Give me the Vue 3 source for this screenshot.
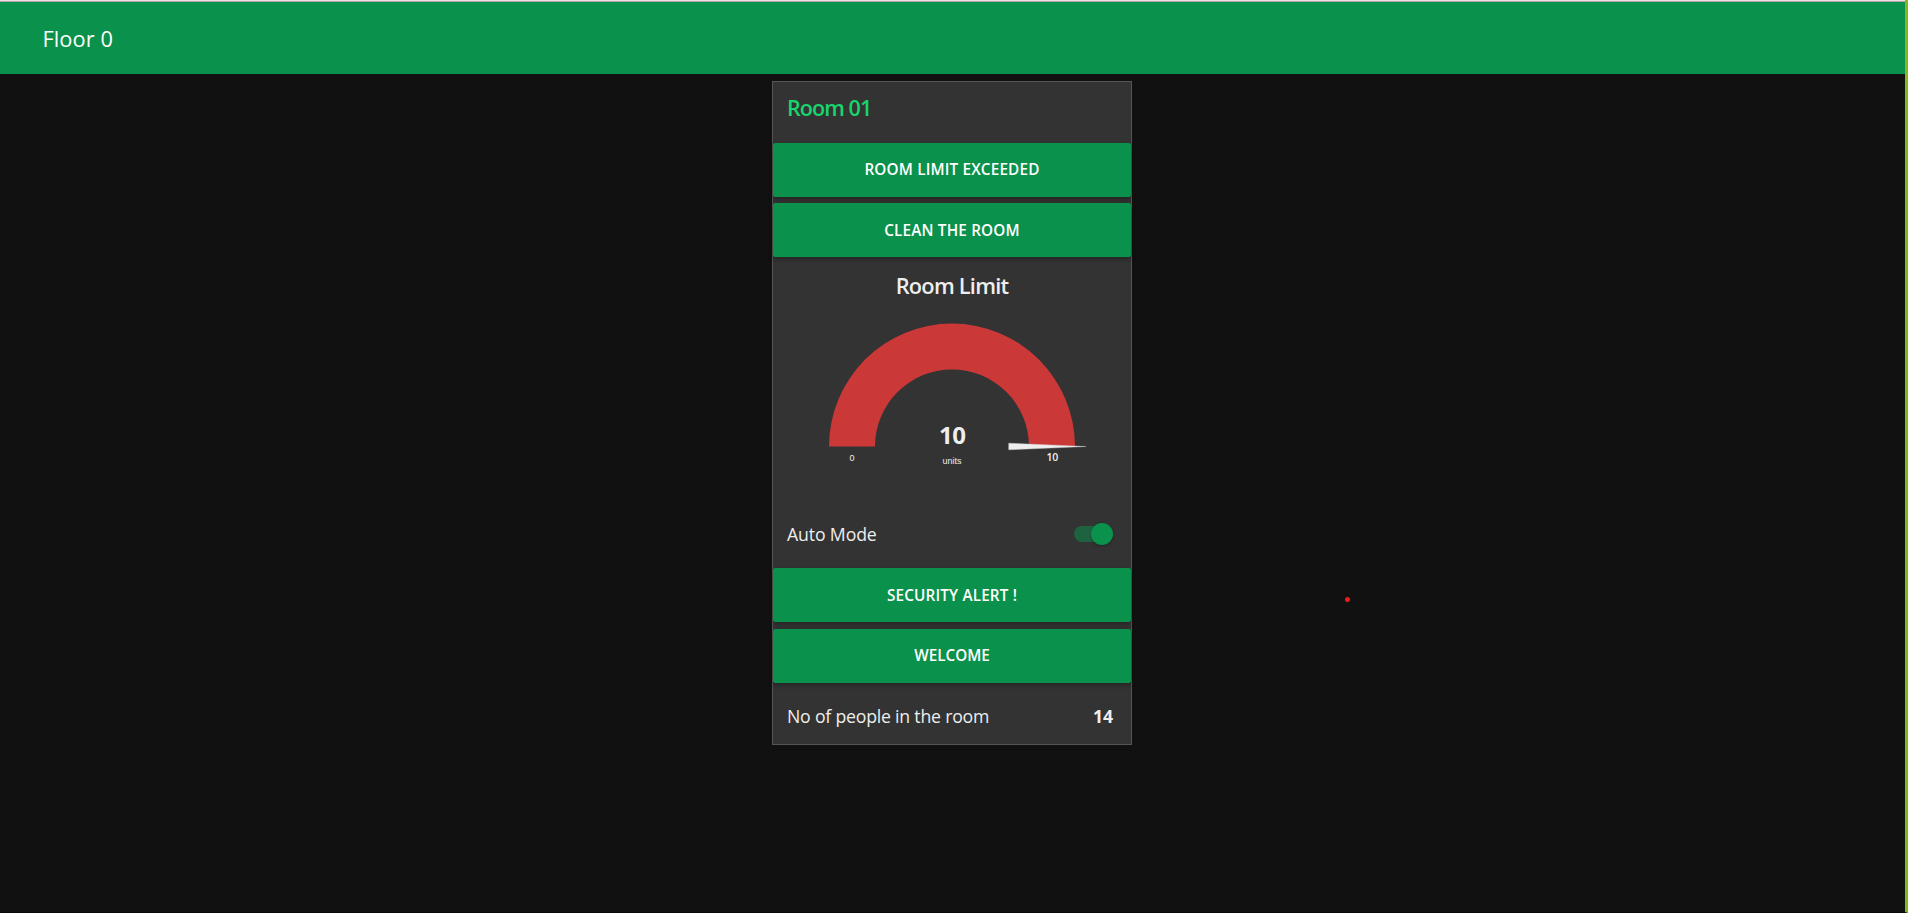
<script setup>
import { ref } from 'vue'

const limit = ref(10)
const people = ref(14)
const autoMode = ref(true)
</script>

<template>
  <div class="screen">
    <div class="page">
      <header class="toolbar"><h1 class="t-floor">Floor 0</h1></header>
      <main class="content">
        <section class="card">
          <h2 class="title"><span class="t-room">Room 01</span></h2>
          <button class="btn raised"><span class="t-exceeded">ROOM LIMIT EXCEEDED</span></button>
          <button class="btn"><span class="t-clean">CLEAN THE ROOM</span></button>
          <div class="gauge">
            <h3 class="t-limit">Room Limit</h3>
            <svg width="358" height="180" viewBox="0 0 358 180">
              <path d="M56 139.5A123 123 0 0 1 302 139.5H256A77 77 0 0 0 102 139.5Z" fill="#ca3838" />
              <path d="M235.7 136.2L313 139.5L235.7 142.8Z" fill="#eee" stroke="#ccc" stroke-width=".4" />
              <text class="g-value" x="179.3" y="137">{{ limit }}</text>
              <text class="g-unit" x="179" y="156.5">units</text>
              <text class="g-min" x="79" y="154">0</text>
              <text class="g-max" x="279.3" y="154">10</text>
            </svg>
          </div>
          <div class="row auto">
            <span class="t-auto">Auto Mode</span>
            <span class="switch" :class="{ on: autoMode }" @click="autoMode = !autoMode"><i></i></span>
          </div>
          <button class="btn"><span class="t-alert">SECURITY ALERT !</span></button>
          <button class="btn raised last"><span class="t-welcome">WELCOME</span></button>
          <div class="row people">
            <span class="t-people">No of people in the room</span>
            <b class="t-count">{{ people }}</b>
          </div>
        </section>
        <i class="dot"></i>
      </main>
    </div>
  </div>
</template>

<style>
html, body { margin: 0; background: #111; overflow: hidden; }
</style>

<style scoped>
.screen {
  box-sizing: border-box;
  height: 913px;
  border-right: 3px solid #84b81f;
  border-bottom: 1px solid #0b0509;
  background: #111;
  font-family: "Open Sans", "Noto Sans", sans-serif;
  color: #eee;
}
.page { border-top: 1px solid #f0dfe3; }
.toolbar {
  box-sizing: border-box;
  height: 73px;
  border-top: 1px solid #b5a5a6;
  padding: 2px 0 0 42.5px;
  display: flex;
  align-items: center;
  background: #0a914b;
  color: #fff;
}
h1, h2, h3 { margin: 0; font-weight: 400; white-space: nowrap; }
.t-floor { font-size: 21.8px; line-height: 30px; letter-spacing: .06px; }
.content { position: relative; padding: 7px 0 0 772px; }
.card {
  box-sizing: border-box;
  width: 360px;
  height: 664px;
  border: 1px solid #555;
  background: #333;
  display: flex;
  flex-direction: column;
}
.card > * { flex: none; }
.title { height: 61px; box-sizing: border-box; padding: 10px 0 0 14px; line-height: 30px; }
.t-room { font-size: 21.6px; font-weight: 600; color: #17d66c; letter-spacing: -.95px; }
.btn {
  box-sizing: border-box;
  height: 54px;
  margin: 0 0 6px;
  padding: 0;
  border: 0;
  border-radius: 2px;
  background: #0a914b;
  color: #fff;
  font: 600 15.3px/54px "Open Sans", "Noto Sans", sans-serif;
  white-space: nowrap;
  box-shadow: 0 2px 5px rgba(0, 0, 0, .32);
}
.btn.raised { line-height: 52px; padding-bottom: 2px; }
.btn.last { margin-top: 1px; }
.t-exceeded, .t-clean, .t-alert { letter-spacing: .16px; }
.t-welcome { letter-spacing: -.02px; }
.gauge { height: 249px; padding-top: 8px; box-sizing: border-box; text-align: center; }
.t-limit { font-size: 21.8px; line-height: 30px; font-weight: 600; letter-spacing: -.78px; }
.gauge svg { display: block; margin-top: 6px; overflow: visible; }
.gauge text { text-anchor: middle; fill: #eee; }
.g-value { font-size: 24px; font-weight: 700; letter-spacing: -.5px; }
.g-unit { font-family: "Liberation Sans", sans-serif; font-size: 9px; }
.g-min { font-family: "Liberation Sans", sans-serif; font-size: 9px; }
.g-max { font-size: 10.5px; font-weight: 600; letter-spacing: -.3px; }
.row {
  box-sizing: border-box;
  display: flex;
  align-items: center;
  justify-content: space-between;
  padding: 0 18px 0 14px;
  font-size: 17.7px;
  line-height: 24px;
  white-space: nowrap;
}
.auto { height: 56px; padding-bottom: 12px; }
.people { height: 55px; padding-bottom: 2px; }
.t-auto { letter-spacing: -.14px; }
.t-people { letter-spacing: -.22px; }
.t-count { font-weight: 700; letter-spacing: -.1px; }
.switch {
  position: relative;
  width: 39px;
  height: 16px;
  border-radius: 8px;
  background: #555;
}
.switch i {
  position: absolute;
  top: -3px;
  left: 0;
  width: 22px;
  height: 22px;
  border-radius: 50%;
  background: #999;
  box-shadow: 0 1px 3px rgba(0, 0, 0, .3);
}
.switch.on { background: #1e633f; }
.switch.on i { left: 17px; background: #0a914b; }
.dot {
  position: absolute;
  left: 1345px;
  top: 523px;
  width: 5px;
  height: 5px;
  border-radius: 50%;
  background: #ed1c1c;
}
</style>
